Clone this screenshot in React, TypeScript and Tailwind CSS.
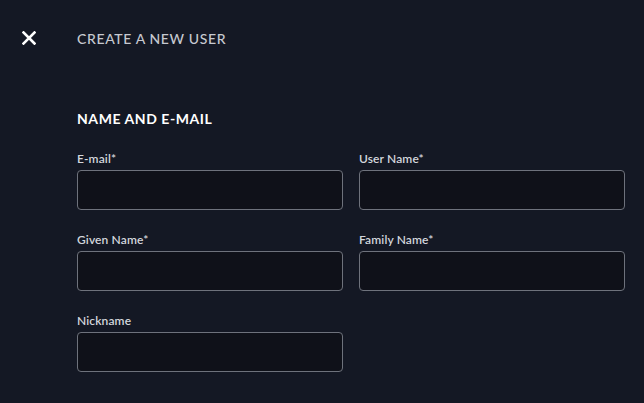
const fields = [
  { label: "E-mail", required: true },
  { label: "User Name", required: true },
  { label: "Given Name", required: true },
  { label: "Family Name", required: true },
  { label: "Nickname", required: false },
];

function CloseIcon() {
  return (
    <svg width="14" height="14" viewBox="0 0 14 14" className="-mt-[3px]">
      <path d="M1.5 1.5L12.5 12.5M12.5 1.5L1.5 12.5" stroke="white" strokeWidth="2.6" strokeLinecap="square" fill="none" />
    </svg>
  );
}

function Field({ label, required }: { label: string; required: boolean }) {
  return (
    <div className="flex flex-col gap-1">
      <label className="text-[12px] leading-4 font-semibold tracking-[0.01em] text-[#d3d6dc] translate-y-[1px]">
        {label}
        {required && "*"}
      </label>
      <input
        type="text"
        className="h-10 w-full rounded-[4px] border border-[#6e727c] bg-[#0f1119] px-3 text-sm text-white outline-none"
      />
    </div>
  );
}

export default function App() {
  return (
    <div
      className="min-h-[403px] w-full bg-[#141824]"
      style={{ fontFamily: "Lato, 'Noto Sans', sans-serif" }}
    >
      <header className="box-content flex h-4 items-center gap-[41px] pl-[22px] pt-[31px]">
        <button className="flex text-white">
          <CloseIcon />
        </button>
        <h1 className="text-[14px] leading-4 font-medium tracking-[0.045em] text-[#c6c9d0]">
          CREATE A NEW USER
        </h1>
      </header>

      <section className="pl-[77px] pt-[64px]">
        <h2 className="text-[14px] leading-4 font-bold tracking-[0.04em] text-white">
          NAME AND E-MAIL
        </h2>
        <div className="mt-[23px] grid grid-cols-[266px_266px] gap-x-4 gap-y-[21px]">
          {fields.map((f) => (
            <Field key={f.label} label={f.label} required={f.required} />
          ))}
        </div>
      </section>
    </div>
  );
}
